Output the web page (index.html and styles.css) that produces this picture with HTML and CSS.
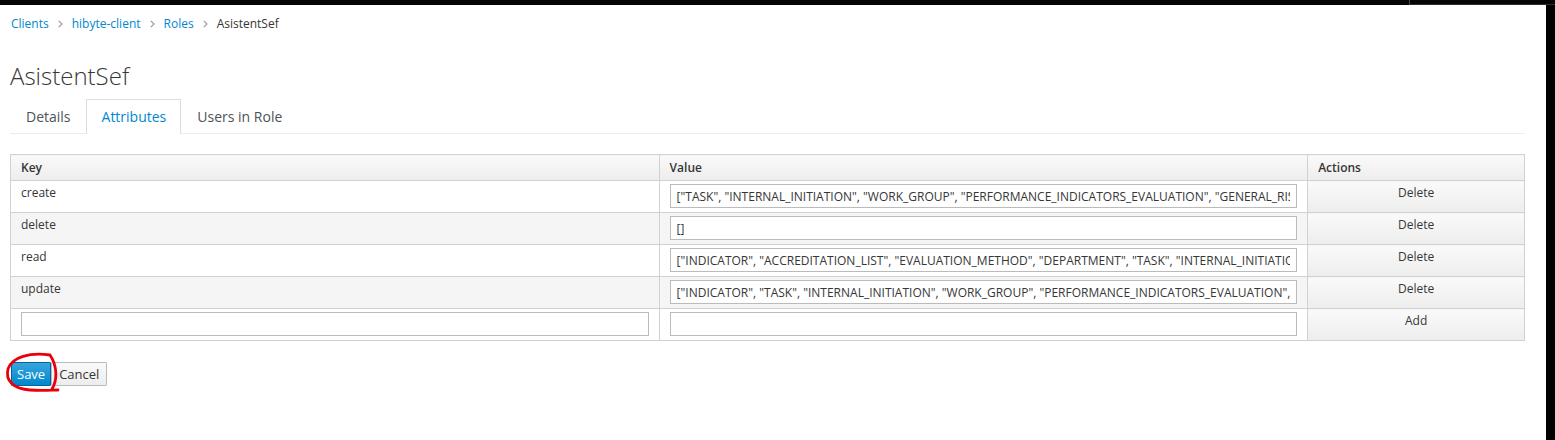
FILE: index.html
```html
<!DOCTYPE html>
<html lang="en">
<head>
<meta charset="utf-8">
<title>AsistentSef</title>
<link rel="stylesheet" href="styles.css">
</head>
<body>
<div class="topbar">
  <div class="topbar-left"></div>
  <div class="topbar-right"></div>
</div>
<div class="frame">
  <main class="content">
    <nav class="breadcrumb">
      <a href="#">Clients</a>
      <svg class="chev" width="5" height="8" viewBox="0 0 5 8"><polyline points="0.8,0.8 4,4 0.8,7.2" fill="none" stroke="#9c9c9c" stroke-width="1.2"/></svg>
      <a href="#">hibyte-client</a>
      <svg class="chev" width="5" height="8" viewBox="0 0 5 8"><polyline points="0.8,0.8 4,4 0.8,7.2" fill="none" stroke="#9c9c9c" stroke-width="1.2"/></svg>
      <a href="#">Roles</a>
      <svg class="chev" width="5" height="8" viewBox="0 0 5 8"><polyline points="0.8,0.8 4,4 0.8,7.2" fill="none" stroke="#9c9c9c" stroke-width="1.2"/></svg>
      <span class="current">AsistentSef</span>
    </nav>
    <h1 class="title">AsistentSef</h1>
    <ul class="tabs">
      <li class="tab">Details</li>
      <li class="tab active">Attributes</li>
      <li class="tab">Users in Role</li>
    </ul>
    <table class="attrs">
      <colgroup>
        <col class="col-key">
        <col class="col-value">
        <col class="col-actions">
      </colgroup>
      <thead>
        <tr><th>Key</th><th>Value</th><th>Actions</th></tr>
      </thead>
      <tbody>
        <tr>
          <td>create</td>
          <td><input class="field" type="text" value="[&quot;TASK&quot;, &quot;INTERNAL_INITIATION&quot;, &quot;WORK_GROUP&quot;, &quot;PERFORMANCE_INDICATORS_EVALUATION&quot;, &quot;GENERAL_RISK&quot;]"></td>
          <td class="action">Delete</td>
        </tr>
        <tr>
          <td>delete</td>
          <td><input class="field" type="text" value="[]"></td>
          <td class="action">Delete</td>
        </tr>
        <tr>
          <td>read</td>
          <td><input class="field" type="text" value="[&quot;INDICATOR&quot;, &quot;ACCREDITATION_LIST&quot;, &quot;EVALUATION_METHOD&quot;, &quot;DEPARTMENT&quot;, &quot;TASK&quot;, &quot;INTERNAL_INITIATION&quot;]"></td>
          <td class="action">Delete</td>
        </tr>
        <tr>
          <td>update</td>
          <td><input class="field" type="text" value="[&quot;INDICATOR&quot;, &quot;TASK&quot;, &quot;INTERNAL_INITIATION&quot;, &quot;WORK_GROUP&quot;, &quot;PERFORMANCE_INDICATORS_EVALUATION&quot;, &quot;GENERAL_RISK&quot;]"></td>
          <td class="action">Delete</td>
        </tr>
        <tr>
          <td><input class="field" type="text" value=""></td>
          <td><input class="field" type="text" value=""></td>
          <td class="action">Add</td>
        </tr>
      </tbody>
    </table>
    <div class="buttons">
      <button class="btn btn-primary" type="button">Save</button>
      <button class="btn btn-default" type="button">Cancel</button>
      <svg class="annot" width="64" height="48" viewBox="0 0 64 48">
        <path d="M50 6 C30 3 12 8 8 20 C5 32 14 40 30 41 C42 42 52 41 58 41 M52 40 C57 32 58 18 50 6" fill="none" stroke="#e8000b" stroke-width="2.8" stroke-linecap="round" stroke-linejoin="round"/>
      </svg>
    </div>
  </main>
  <div class="rightbar"></div>
</div>
</body>
</html>
```

FILE: styles.css
```css
* {
  box-sizing: border-box;
}

html, body {
  margin: 0;
  padding: 0;
  height: 100%;
}

body {
  font-family: "Open Sans", "Liberation Sans", sans-serif;
  font-size: 12px;
  color: #363636;
  background: #000;
  overflow: hidden;
}

.topbar {
  display: flex;
  height: 5px;
  background: #050505;
}

.topbar-left {
  width: 1409px;
}

.topbar-right {
  flex: 1;
  border-left: 1px solid #4a4a4a;
  border-bottom: 1px solid #2e2e2e;
}

.frame {
  display: flex;
  height: 435px;
}

.content {
  flex: 1;
  background: #fff;
  padding: 10px 21px 0 10px;
  position: relative;
}

.rightbar {
  width: 9px;
  background: #000;
}

.breadcrumb {
  display: flex;
  align-items: center;
  gap: 9px;
  height: 18px;
  line-height: 18px;
  padding-left: 1px;
}

.breadcrumb a {
  color: #0088ce;
  text-decoration: none;
}

.breadcrumb .current {
  color: #363636;
}

.chev {
  display: block;
}

.title {
  margin: 29px 0 0 0;
  font-size: 24px;
  font-weight: 300;
  line-height: 27px;
  color: #363636;
}

.tabs {
  display: flex;
  list-style: none;
  margin: 10px 0 0 0;
  padding: 0;
  border-bottom: 1px solid #ededed;
  height: 35px;
}

.tab {
  font-size: 14px;
  line-height: 34px;
  padding: 0 14px 0 15px;
  color: #4d5258;
  border: 1px solid transparent;
  border-bottom: 0;
  height: 35px;
}

.tab.active {
  color: #0088ce;
  border-color: #ddd;
  background: #fff;
  height: 35px;
  margin-bottom: -1px;
}

.attrs {
  width: 100%;
  margin-top: 20px;
  border-collapse: collapse;
  border: 1px solid #d1d1d1;
  table-layout: fixed;
}

.col-key,
.col-value {
  width: 42.84%;
}

.attrs th {
  text-align: left;
  font-weight: 600;
  height: 26px;
  padding: 0 10px;
  line-height: 24px;
  background: linear-gradient(to bottom, #fafafa 0, #ededed 100%);
  border: 1px solid #d1d1d1;
  color: #363636;
}

.attrs td {
  border: 1px solid #d1d1d1;
  padding: 3px 10px;
  height: 32px;
  vertical-align: top;
  line-height: 17px;
}

.attrs tbody tr:nth-child(even) td {
  background: #f5f5f5;
}

.attrs td.action,
.attrs tbody tr:nth-child(even) td.action {
  text-align: center;
  background: linear-gradient(to bottom, #fafafa 0, #ededed 100%);
}

.field {
  display: block;
  width: 100%;
  height: 24px;
  border: 1px solid #bbb;
  padding: 2px 6px;
  font-family: "Open Sans", "Liberation Sans", sans-serif;
  font-size: 12px;
  color: #363636;
  background: #fff;
  outline: none;
}

.buttons {
  display: flex;
  margin-top: 21px;
  padding-left: 1px;
  position: relative;
}

.btn {
  font-family: "Open Sans", "Liberation Sans", sans-serif;
  font-size: 13px;
  height: 24px;
  line-height: 20px;
  border: 1px solid;
  border-radius: 1px;
  cursor: pointer;
}

.btn-primary {
  color: #fff;
  padding: 0 5px;
  background: linear-gradient(to bottom, #39a5dc 0, #0088ce 100%);
  border-color: #00659c;
}

.btn-default {
  color: #363636;
  padding: 0 7px;
  background: linear-gradient(to bottom, #fafafa 0, #ededed 100%);
  border-color: #bbb;
}

.annot {
  position: absolute;
  left: -10px;
  top: -13px;
  pointer-events: none;
}
```
